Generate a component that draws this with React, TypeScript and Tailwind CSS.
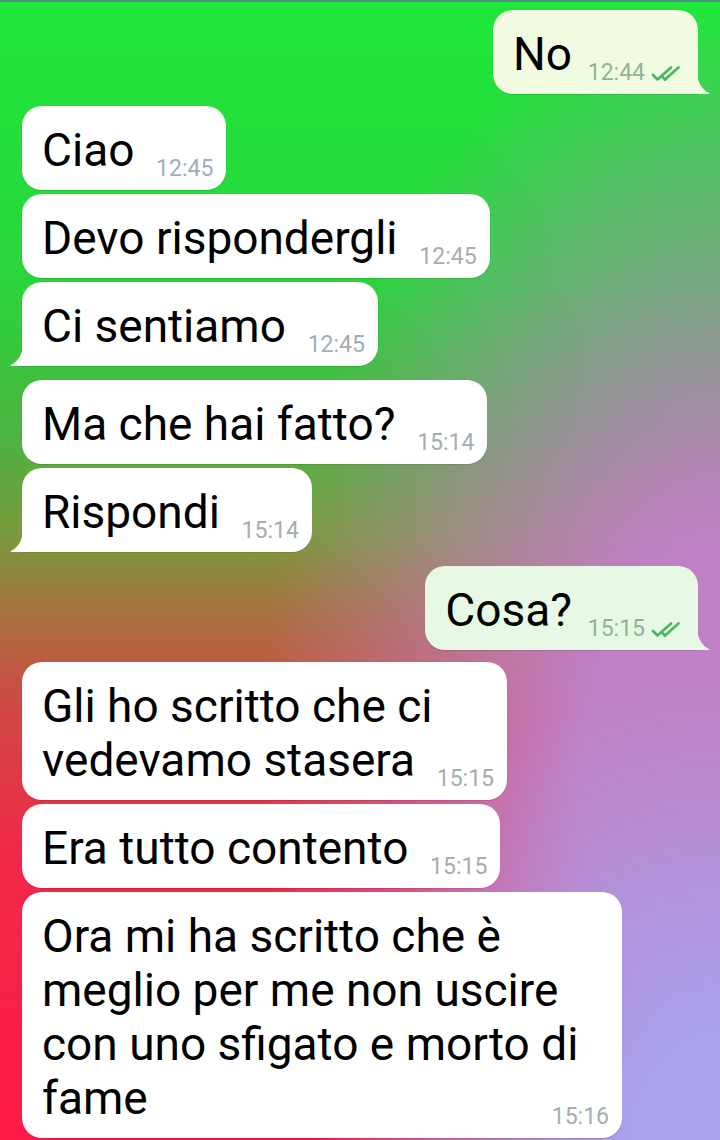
import React from 'react'

interface Msg {
  out?: boolean
  lines: string[]
  time: string
  tail?: boolean
  gap: string
  bg?: string
  wide?: boolean
}

const MSGS: Msg[] = [
  { out: true, lines: ['No'], time: '12:44', tail: true, gap: 'mt-0', bg: '#f1fbe2' },
  { lines: ['Ciao'], time: '12:45', gap: 'mt-3' },
  { lines: ['Devo rispondergli'], time: '12:45', gap: 'mt-1' },
  { lines: ['Ci sentiamo'], time: '12:45', gap: 'mt-1', tail: true },
  { lines: ['Ma che hai fatto?'], time: '15:14', gap: 'mt-[14px]' },
  { lines: ['Rispondi'], time: '15:14', gap: 'mt-1', tail: true },
  { out: true, lines: ['Cosa?'], time: '15:15', tail: true, gap: 'mt-[14px]', bg: '#e7f8e5' },
  { lines: ['Gli ho scritto che ci', 'vedevamo stasera'], time: '15:15', gap: 'mt-3' },
  { lines: ['Era tutto contento'], time: '15:15', gap: 'mt-1' },
  { lines: ['Ora mi ha scritto che è', 'meglio per me non uscire', 'con uno sfigato e morto di', 'fame'], time: '15:16', gap: 'mt-1', wide: true },
]

function Checks() {
  return (
    <svg width="36" height="17" viewBox="0 0 36 17" fill="none" stroke="#4cb85e" strokeWidth="2.7" strokeLinecap="round" strokeLinejoin="round">
      <path d="M3 10 L7.5 14.5 L21 2.5" />
      <path d="M15 14.5 L28.5 2.5" />
      <path d="M12.5 12 L15 14.5" />
    </svg>
  )
}

function Tail({ out, fill }: { out?: boolean; fill: string }) {
  if (out) {
    return (
      <svg className="absolute bottom-0 right-[-12px]" width="13" height="24" viewBox="0 0 13 24">
        <path d="M0 0 C0 11 4 19 12 23 C12.6 23.3 12.4 24 11.6 24 L0 24 Z" fill={fill} />
      </svg>
    )
  }
  return (
    <svg className="absolute bottom-0 left-[-12px]" width="13" height="24" viewBox="0 0 13 24">
      <path d="M13 0 C13 11 9 19 1 23 C0.4 23.3 0.6 24 1.4 24 L13 24 Z" fill={fill} />
    </svg>
  )
}

function Bubble({ m }: { m: Msg }) {
  const fill = m.out ? m.bg ?? '#effddf' : '#ffffff'
  const corner = m.tail ? (m.out ? 'rounded-br-none' : 'rounded-bl-none') : ''
  return (
    <div className={`flex ${m.out ? 'justify-end pr-[22px]' : 'justify-start pl-[22px]'} ${m.gap}`}>
      <div
        className={`relative rounded-[20px] ${corner} px-[20px] pt-[17px] pb-[13px] text-[46px] leading-[54px] text-black shadow-[0_1px_1px_rgba(0,0,0,0.12)] ${m.wide ? 'w-[600px]' : 'w-fit'}`}
        style={{ backgroundColor: fill }}
      >
        {m.lines.map((l, i) => (
          <div key={i} className="whitespace-nowrap">
            {l}
            {i === m.lines.length - 1 && (
              <span className={`inline-block ${m.out ? 'w-[106px]' : 'w-[72px]'}`} />
            )}
          </div>
        ))}
        <div className={`absolute bottom-[10px] flex items-center gap-[5px] text-[23px] leading-[22px] ${m.out ? 'right-[12px] text-[#93b393]' : 'right-[13px] text-[#a4adb3]'}`}>
          <span>{m.time}</span>
          {m.out && <Checks />}
        </div>
        {m.tail && <Tail out={m.out} fill={fill} />}
      </div>
    </div>
  )
}

export default function App() {
  return (
    <main
      className="h-screen w-full overflow-hidden bg-[image:radial-gradient(400px_460px_at_720px_1140px,#a8a2ee_0%,#a8a2ee_20%,rgba(168,162,238,0)_100%),radial-gradient(460px_780px_at_720px_780px,#c080c6_0%,#c080c6_30%,rgba(192,128,198,0)_100%),linear-gradient(180deg,#1ee83a_0%,#2ad43c_25%,#4cb440_38%,#7a9a3c_47%,#a8703f_54%,#d04844_62%,#f02848_75%,#ff1a48_100%)]"
      style={{ fontFamily: 'Roboto, "Noto Sans", sans-serif' }}
    >
      <div className="h-[2px] bg-[#4f8f88]" />
      <div className="pt-[8px]">
        {MSGS.map((m, i) => (
          <Bubble key={i} m={m} />
        ))}
      </div>
    </main>
  )
}
